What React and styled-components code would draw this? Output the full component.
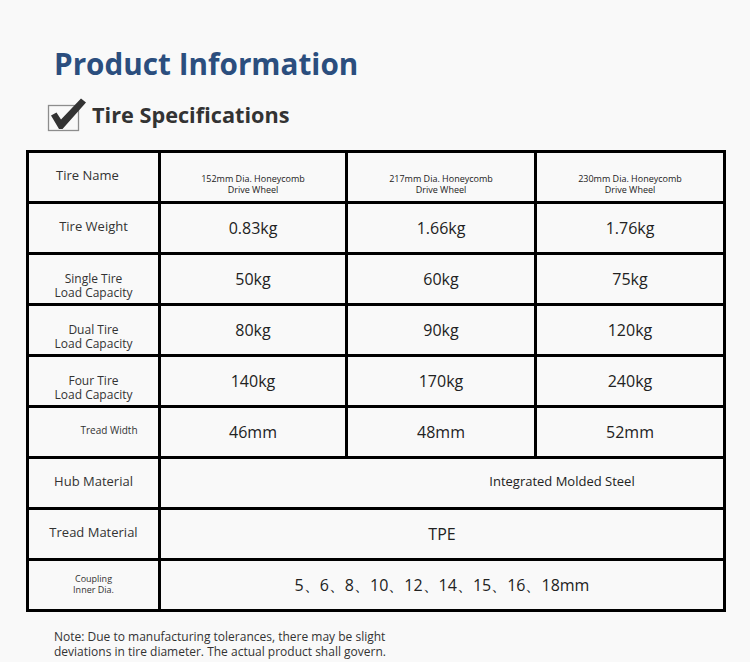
import React from "react";
import styled, { createGlobalStyle } from "styled-components";

const Global = createGlobalStyle`
  html, body { margin: 0; padding: 0; background: #f9f9f9; }
  body { font-family: "Open Sans", "Noto Sans", sans-serif; color: #222; }
`;

const Page = styled.div`
  width: 750px;
  height: 662px;
  box-sizing: border-box;
  padding: 44px 0 0 26px;
  overflow: hidden;
`;

const Title = styled.h1`
  margin: 0 0 0 28px;
  font-size: 29.7px;
  line-height: 40px;
  font-weight: 700;
  color: #2b4e7e;
`;

const SubHeader = styled.div`
  display: flex;
  align-items: center;
  gap: 5px;
  margin: 14px 0 18px 21px;
`;

const SubTitle = styled.h2`
  margin: 0;
  font-size: 21.7px;
  line-height: 30px;
  font-weight: 700;
  color: #333;
`;

const Table = styled.table`
  border-collapse: collapse;
  table-layout: fixed;
  width: 697px;
  border: 3px solid #000;
`;

const Row = styled.tr`
  height: 51px;
`;

const Cell = styled.td`
  border: 3px solid #000;
  padding: 0;
  text-align: center;
  vertical-align: middle;
  color: #222;
  font-size: ${(p) => p.$size || 16}px;
  line-height: ${(p) => p.$lh || 22}px;
  padding-left: ${(p) => p.$shift || 0}px;
  padding-right: ${(p) => p.$pullLeft || 0}px;
  padding-top: ${(p) => p.$down || 0}px;
  padding-bottom: ${(p) => p.$up || 0}px;
`;

const LabelCell = styled(Cell)`
  font-size: ${(p) => p.$size || 13}px;
  line-height: ${(p) => p.$lh || 15}px;
  color: #333;
`;

const Line = styled.span`
  display: block;
  height: ${(p) => p.$h}px;
`;

const Note = styled.p`
  margin: 17px 0 0 28px;
  font-size: 12px;
  line-height: 15px;
  color: #333;
`;

function CheckIcon() {
  return (
    <svg width="40" height="34" viewBox="0 0 40 34">
      <rect x="1.5" y="7.5" width="30" height="25" fill="none" stroke="#8d8d8d" strokeWidth="1.3" />
      <path d="M4 17.5 L9.5 14.5 L14 21.5 L34 0.5 L39 4.5 L15.5 31 L12 31 Z" fill="#333" />
    </svg>
  );
}

const rows = [
  { label: "Tire Weight", vals: ["0.83kg", "1.66kg", "1.76kg"] },
  { label: ["Single Tire", "Load Capacity"], vals: ["50kg", "60kg", "75kg"] },
  { label: ["Dual Tire", "Load Capacity"], vals: ["80kg", "90kg", "120kg"] },
  { label: ["Four Tire", "Load Capacity"], vals: ["140kg", "170kg", "240kg"] },
];

function Lines({ items, h }) {
  return items.map((t) => (
    <Line key={t} $h={h}>
      {t}
    </Line>
  ));
}

export default function App() {
  return (
    <Page>
      <Global />
      <Title>Product Information</Title>
      <SubHeader>
        <CheckIcon />
        <SubTitle>Tire Specifications</SubTitle>
      </SubHeader>
      <Table>
        <colgroup>
          <col style={{ width: "132px" }} />
          <col style={{ width: "187px" }} />
          <col style={{ width: "189px" }} />
          <col style={{ width: "189px" }} />
        </colgroup>
        <tbody>
          <Row>
            <LabelCell $pullLeft={12} $up={4}>Tire Name</LabelCell>
            {["152", "217", "230"].map((d) => (
              <Cell key={d} $size={9} $lh={11} $down={14}>
                <Lines items={[`${d}mm Dia. Honeycomb`, "Drive Wheel"]} h={11} />
              </Cell>
            ))}
          </Row>
          {rows.map((r, i) => {
            const multi = Array.isArray(r.label);
            return (
              <Row key={i}>
                {multi ? (
                  <LabelCell $size={12} $lh={14} $down={14}>
                    <Lines items={r.label} h={14} />
                  </LabelCell>
                ) : (
                  <LabelCell $up={4}>{r.label}</LabelCell>
                )}
                {r.vals.map((v) => (
                  <Cell key={v}>{v}</Cell>
                ))}
              </Row>
            );
          })}
          <Row>
            <LabelCell $size={10} $lh={13} $shift={31} $up={4}>Tread Width</LabelCell>
            <Cell>46mm</Cell>
            <Cell>48mm</Cell>
            <Cell>52mm</Cell>
          </Row>
          <Row>
            <LabelCell $up={4}>Hub Material</LabelCell>
            <Cell colSpan={3} $size={13} $lh={15} $shift={240} $up={4}>Integrated Molded Steel</Cell>
          </Row>
          <Row>
            <LabelCell $up={4}>Tread Material</LabelCell>
            <Cell colSpan={3}>TPE</Cell>
          </Row>
          <Row>
            <LabelCell $size={9} $lh={11} $up={2}>
              <Lines items={["Coupling", "Inner Dia."]} h={11} />
            </LabelCell>
            <Cell colSpan={3}>5、6、8、10、12、14、15、16、18mm</Cell>
          </Row>
        </tbody>
      </Table>
      <Note>
        <Line $h={15}>Note: Due to manufacturing tolerances, there may be slight</Line>
        <Line $h={15}>deviations in tire diameter. The actual product shall govern.</Line>
      </Note>
    </Page>
  );
}
